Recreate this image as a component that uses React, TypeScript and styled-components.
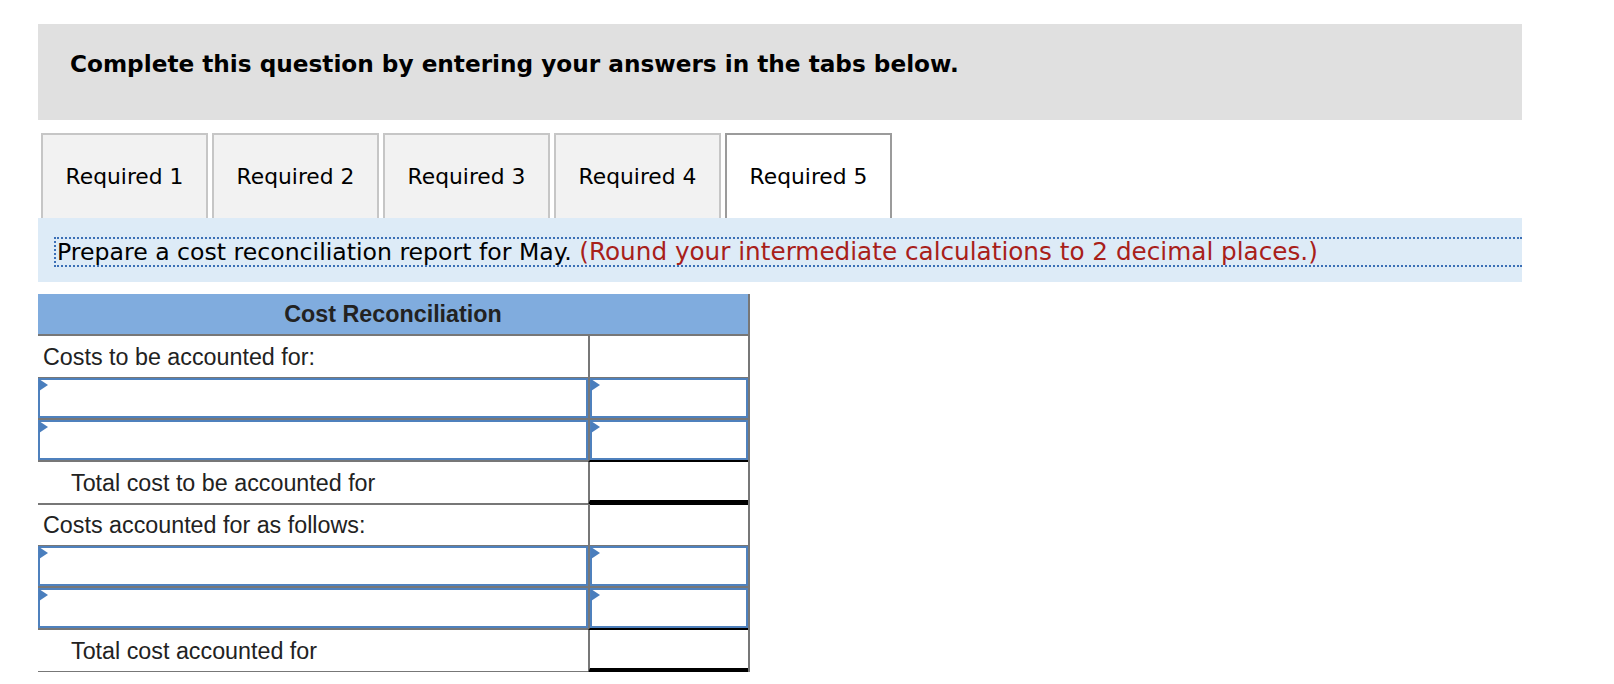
import React from "react";
import styled, { createGlobalStyle } from "styled-components";

const GlobalStyle = createGlobalStyle`
  body {
    margin: 0;
    background: #ffffff;
    font-family: "DejaVu Sans", Verdana, sans-serif;
  }
`;

const Page = styled.main`
  padding: 24px 0 0 38px;
  width: 1484px;
`;

const Banner = styled.header`
  box-sizing: border-box;
  height: 96px;
  padding: 26px 32px 0;
  background: #e0e0e0;
`;

const BannerText = styled.h1`
  margin: 0;
  font-size: 23.2px;
  font-weight: bold;
  color: #000;
`;

const TabList = styled.nav`
  display: flex;
  gap: 4px;
  margin-top: 13px;
  padding-left: 3px;
`;

const Tab = styled.button<{ $active?: boolean }>`
  box-sizing: border-box;
  width: 167px;
  height: 85px;
  display: flex;
  align-items: center;
  justify-content: center;
  padding: 0;
  border: 2px solid ${(p) => (p.$active ? "#9b9b9b" : "#c6c6c6")};
  border-bottom: none;
  background: ${(p) => (p.$active ? "#ffffff" : "#f2f2f2")};
  font-family: "DejaVu Sans", Verdana, sans-serif;
  font-size: 21.8px;
  color: #000;
  cursor: pointer;
`;

const Instructions = styled.div`
  display: flex;
  padding: 19px 0 15px 16px;
  background: #ddebf7;
`;

const Prompt = styled.p`
  flex: 1;
  margin: 0;
  padding-left: 1px;
  border: 2px dotted #3b6fb6;
  border-right: none;
  font-size: 23.6px;
  line-height: 26px;
  white-space: nowrap;
  color: #000;
`;

const Note = styled.span`
  font-size: 24.7px;
  color: #a8201a;
`;

const Table = styled.section`
  box-sizing: border-box;
  width: 712px;
  margin-top: 12px;
  border-right: 2px solid #777;
  font-family: "Liberation Sans", Arial, sans-serif;
  font-size: 23.3px;
  color: #222;
`;

const TableHead = styled.div`
  height: 40px;
  line-height: 40px;
  border-bottom: 2px solid #777;
  background: #80acde;
  text-align: center;
  font-weight: bold;
`;

const Row = styled.div`
  display: grid;
  grid-template-columns: 550px 1fr;
  height: 42px;
`;

const LabelCell = styled.div<{ $indent?: boolean }>`
  box-sizing: border-box;
  padding: 1px 0 0 ${(p) => (p.$indent ? "33px" : "5px")};
  line-height: 40px;
  border-bottom: 2px solid #777;
  white-space: nowrap;
`;

const EntryCell = styled.div`
  box-sizing: border-box;
  border-bottom: 2px solid #777;
`;

type Edge = "gray" | "black" | "thick";

const AmountCell = styled.div<{ $edge?: Edge }>`
  box-sizing: border-box;
  border-left: 2px solid #777;
  border-bottom: ${(p) =>
    p.$edge === "thick"
      ? "5px solid #000"
      : p.$edge === "black"
      ? "2px solid #000"
      : "2px solid #777"};
`;

const InputWrap = styled.div`
  position: relative;
  height: 100%;
`;

const Field = styled.input`
  box-sizing: border-box;
  display: block;
  width: 100%;
  height: 100%;
  margin: 0;
  border: 2px solid #4f81bd;
  background: #fff;
  outline: none;
  font: inherit;
`;

const Marker = styled.span`
  position: absolute;
  top: 1px;
  left: 1px;
  width: 0;
  height: 0;
  border-top: 6.5px solid transparent;
  border-bottom: 6.5px solid transparent;
  border-left: 9px solid #4a7ebd;
`;

const Entry = () => (
  <InputWrap>
    <Field type="text" />
    <Marker />
  </InputWrap>
);

const tabs = ["Required 1", "Required 2", "Required 3", "Required 4", "Required 5"];

interface Section {
  heading: string;
  total: string;
}

const sections: Section[] = [
  { heading: "Costs to be accounted for:", total: "Total cost to be accounted for" },
  { heading: "Costs accounted for as follows:", total: "Total cost accounted for" },
];

const App = () => {
  return (
    <Page>
      <GlobalStyle />
      <Banner>
        <BannerText>Complete this question by entering your answers in the tabs below.</BannerText>
      </Banner>
      <TabList>
        {tabs.map((t, i) => (
          <Tab key={t} $active={i === 4}>
            {t}
          </Tab>
        ))}
      </TabList>
      <Instructions>
        <Prompt>
          Prepare a cost reconciliation report for May.{" "}
          <Note>(Round your intermediate calculations to 2 decimal places.)</Note>
        </Prompt>
      </Instructions>
      <Table>
        <TableHead>Cost Reconciliation</TableHead>
        {sections.map((s) => (
          <React.Fragment key={s.heading}>
            <Row>
              <LabelCell>{s.heading}</LabelCell>
              <AmountCell />
            </Row>
            <Row>
              <EntryCell>
                <Entry />
              </EntryCell>
              <AmountCell>
                <Entry />
              </AmountCell>
            </Row>
            <Row>
              <EntryCell>
                <Entry />
              </EntryCell>
              <AmountCell $edge="black">
                <Entry />
              </AmountCell>
            </Row>
            <Row>
              <LabelCell $indent>{s.total}</LabelCell>
              <AmountCell $edge="thick" />
            </Row>
          </React.Fragment>
        ))}
      </Table>
    </Page>
  );
};

export default App;
